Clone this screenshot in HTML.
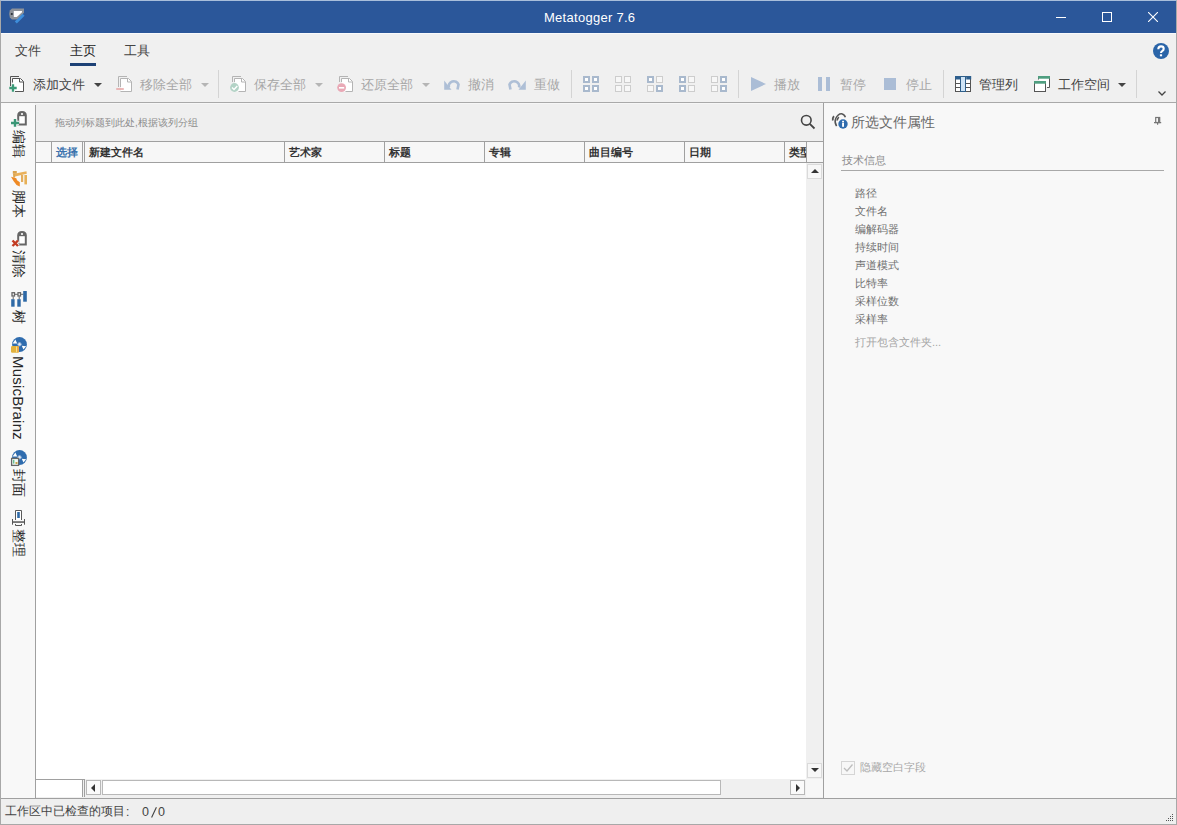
<!DOCTYPE html>
<html><head><meta charset="utf-8">
<style>
*{box-sizing:border-box;margin:0;padding:0}
html,body{width:1177px;height:825px;overflow:hidden;background:#f0f0f0}
body{position:relative;font-family:"Liberation Sans",sans-serif;color:#444}
.a{position:absolute}
.t{position:absolute;white-space:nowrap;line-height:1}
#win{position:absolute;left:0;top:0;width:1177px;height:825px;border:1px solid #a8a8a8;border-top-color:#a8bedb;border-right-color:#a8a8a8}
#title{left:1px;top:1px;width:1175px;height:32px;background:#2b579a}
.rb{color:#444;font-size:13px}
.dis{color:#a6a6a6}
.sep{position:absolute;width:1px;background:#d4d4d4;top:70px;height:28px}
.arr{position:absolute;width:0;height:0;border-left:4px solid transparent;border-right:4px solid transparent;border-top:4px solid #444}
.arr.d{border-top-color:#b5b5b5}
.hl{position:absolute;background:#a0a0a0}
</style></head><body>
<div id="win"></div>
<div class="a" id="title"></div>
<div class="a" style="left:1px;top:33px;width:1175px;height:1px;background:#f9fafb"></div>
<!-- app icon -->
<svg class="a" style="left:0;top:0" width="30" height="30" viewBox="0 0 30 30">
 <path d="M9.8 10.5 Q8.6 14 9.8 17.2 L11.8 19.5 H17.2 L24 12.8 V8.4 H12 Z" fill="#8d9299"/>
 <path d="M13.8 10.9 H22 V12.3 L16.8 17 H13.8 Z" fill="#fff"/>
 <circle cx="11.8" cy="14" r="1.1" fill="#2a2f36"/>
 <path d="M15.8 22.6 L23.6 14.8" stroke="#3e8edb" stroke-width="2.8"/>
</svg>
<div class="t" style="left:544px;top:11px;font-size:13px;letter-spacing:0.28px;color:#fff">Metatogger 7.6</div>
<!-- window controls -->
<div class="a" style="left:1056px;top:17px;width:10px;height:1px;background:#fff"></div>
<div class="a" style="left:1102px;top:12px;width:10px;height:10px;border:1px solid #fff"></div>
<svg class="a" style="left:1148px;top:12px" width="10" height="10" viewBox="0 0 10 10"><path d="M0 0 L10 10 M10 0 L0 10" stroke="#fff" stroke-width="1.1"/></svg>

<!-- tabs -->
<div class="t rb" style="left:15px;top:44px;font-size:13px">文件</div>
<div class="t rb" style="left:70px;top:44px;font-size:13px;color:#222">主页</div>
<div class="a" style="left:70px;top:63px;width:26px;height:3px;background:#1d4176"></div>
<div class="t rb" style="left:124px;top:44px;font-size:13px">工具</div>
<svg class="a" style="left:1153px;top:43px" width="16" height="16" viewBox="0 0 16 16"><circle cx="8" cy="8" r="8" fill="#2a64a8"/><path d="M5.3 6.2 Q5.3 3.4 8 3.4 Q10.7 3.4 10.7 5.8 Q10.7 7.3 9.1 8.1 Q8 8.7 8 10" fill="none" stroke="#fff" stroke-width="2.1"/><rect x="6.9" y="11.3" width="2.2" height="2" fill="#fff"/></svg>

<!-- toolbar -->
<div id="tb">
<svg class="a" style="left:7px;top:74px" width="20" height="20" viewBox="0 0 20 20">
<path d="M6.0 4.5 H14.0 L17.0 7.5 V17.5 H6.0 Z" fill="#fff"/>
<path d="M3.5 12 V2.5 H12.0" fill="none" stroke="#555" stroke-width="1"/>
<path d="M5.5 8.5 V4.5 H13.5 L16.5 7.5 V17.5 H8" fill="none" stroke="#555" stroke-width="1"/>
<path d="M12.5 4.5 V8 H16.5" fill="none" stroke="#555" stroke-width="1"/>
<path d="M2.3 14 H9.7 M6 10.3 V17.8" stroke="#3d9a78" stroke-width="2.3"/></svg>
<div class="t" style="left:33px;top:78px;font-size:13px;color:#444;">添加文件</div>
<div class="arr" style="left:94px;top:83px"></div>
<svg class="a" style="left:114px;top:74px" width="20" height="20" viewBox="0 0 20 20">
<path d="M7.0 4.5 H15.0 L18.0 7.5 V17.5 H7.0 Z" fill="#fff"/>
<path d="M4.5 13 V2.5 H13.0" fill="none" stroke="#b4b4b4" stroke-width="1"/>
<path d="M6.5 13 V4.5 H14.5 L17.5 7.5 V17.5 H6.5" fill="none" stroke="#b4b4b4" stroke-width="1"/>
<path d="M13.5 4.5 V8 H17.5" fill="none" stroke="#b4b4b4" stroke-width="1"/>
<rect x="2.2" y="14.2" width="7.6" height="1.6" fill="#e8a9a9"/></svg>
<div class="t" style="left:140px;top:78px;font-size:13px;color:#a6a6a6;">移除全部</div>
<div class="arr d" style="left:201px;top:83px"></div>
<div class="sep" style="left:218px"></div>
<svg class="a" style="left:227px;top:74px" width="20" height="20" viewBox="0 0 20 20">
<path d="M8.0 4.5 H16.0 L19.0 7.5 V17.5 H8.0 Z" fill="#fff"/>
<path d="M5.5 8 V2.5 H14.0" fill="none" stroke="#b4b4b4" stroke-width="1"/>
<path d="M7.5 8 V4.5 H15.5 L18.5 7.5 V17.5 H11.5" fill="none" stroke="#b4b4b4" stroke-width="1"/>
<path d="M14.5 4.5 V8 H18.5" fill="none" stroke="#b4b4b4" stroke-width="1"/>
<circle cx="7.5" cy="13.5" r="4.4" fill="#b3d3c6"/><path d="M5 13.5 L7 15.5 L10.3 12" fill="none" stroke="#fff" stroke-width="1.4"/></svg>
<div class="t" style="left:254px;top:78px;font-size:13px;color:#a6a6a6;">保存全部</div>
<div class="arr d" style="left:315px;top:83px"></div>
<svg class="a" style="left:334px;top:74px" width="20" height="20" viewBox="0 0 20 20">
<path d="M8.0 4.5 H16.0 L19.0 7.5 V17.5 H8.0 Z" fill="#fff"/>
<path d="M5.5 8 V2.5 H14.0" fill="none" stroke="#b4b4b4" stroke-width="1"/>
<path d="M7.5 8 V4.5 H15.5 L18.5 7.5 V17.5 H11.5" fill="none" stroke="#b4b4b4" stroke-width="1"/>
<path d="M14.5 4.5 V8 H18.5" fill="none" stroke="#b4b4b4" stroke-width="1"/>
<circle cx="7.6" cy="13.6" r="4.4" fill="#e9a9b6"/><rect x="5" y="13" width="5.2" height="1.6" fill="#fff"/></svg>
<div class="t" style="left:361px;top:78px;font-size:13px;color:#a6a6a6;">还原全部</div>
<div class="arr d" style="left:422px;top:83px"></div>
<svg class="a" style="left:441px;top:74px" width="20" height="20" viewBox="0 0 20 20">
<path d="M8 13.5 A5 4.8 0 0 1 17.5 10.5 L16.5 15.5" fill="none" stroke="#aebfd6" stroke-width="2.6"/>
<path d="M3.2 6.5 V15.8 H10.5 Z" fill="#aebfd6"/></svg>
<div class="t" style="left:468px;top:78px;font-size:13px;color:#a6a6a6;">撤消</div>
<svg class="a" style="left:507px;top:74px" width="20" height="20" viewBox="0 0 20 20">
<path d="M12 13.5 A5 4.8 0 0 0 2.5 10.5 L3.5 15.5" fill="none" stroke="#aebfd6" stroke-width="2.6"/>
<path d="M18.8 6.5 V15.8 H11.5 Z" fill="#aebfd6"/></svg>
<div class="t" style="left:534px;top:78px;font-size:13px;color:#a6a6a6;">重做</div>
<div class="sep" style="left:571px"></div>
<svg class="a" style="left:583px;top:76px" width="16" height="16" viewBox="0 0 16 16"><rect x="1" y="1" width="5" height="5" fill="#fff" stroke="#a9b9cd" stroke-width="2"/><rect x="10" y="1" width="5" height="5" fill="#fff" stroke="#a9b9cd" stroke-width="2"/><rect x="1" y="10" width="5" height="5" fill="#fff" stroke="#a9b9cd" stroke-width="2"/><rect x="10" y="10" width="5" height="5" fill="#fff" stroke="#a9b9cd" stroke-width="2"/></svg>
<svg class="a" style="left:615px;top:76px" width="16" height="16" viewBox="0 0 16 16"><rect x="0.5" y="0.5" width="6" height="6" fill="#f7f7f7" stroke="#cdcdcd" stroke-width="1"/><rect x="9.5" y="0.5" width="6" height="6" fill="#f7f7f7" stroke="#cdcdcd" stroke-width="1"/><rect x="0.5" y="9.5" width="6" height="6" fill="#f7f7f7" stroke="#cdcdcd" stroke-width="1"/><rect x="9.5" y="9.5" width="6" height="6" fill="#f7f7f7" stroke="#cdcdcd" stroke-width="1"/></svg>
<svg class="a" style="left:647px;top:76px" width="16" height="16" viewBox="0 0 16 16"><rect x="1" y="1" width="5" height="5" fill="#fff" stroke="#a9b9cd" stroke-width="2"/><rect x="9.5" y="0.5" width="6" height="6" fill="#f7f7f7" stroke="#cdcdcd" stroke-width="1"/><rect x="0.5" y="9.5" width="6" height="6" fill="#f7f7f7" stroke="#cdcdcd" stroke-width="1"/><rect x="10" y="10" width="5" height="5" fill="#fff" stroke="#a9b9cd" stroke-width="2"/></svg>
<svg class="a" style="left:679px;top:76px" width="16" height="16" viewBox="0 0 16 16"><rect x="1" y="1" width="5" height="5" fill="#fff" stroke="#a9b9cd" stroke-width="2"/><rect x="9.5" y="0.5" width="6" height="6" fill="#f7f7f7" stroke="#cdcdcd" stroke-width="1"/><rect x="1" y="10" width="5" height="5" fill="#fff" stroke="#a9b9cd" stroke-width="2"/><rect x="9.5" y="9.5" width="6" height="6" fill="#f7f7f7" stroke="#cdcdcd" stroke-width="1"/></svg>
<svg class="a" style="left:711px;top:76px" width="16" height="16" viewBox="0 0 16 16"><rect x="0.5" y="0.5" width="6" height="6" fill="#f7f7f7" stroke="#cdcdcd" stroke-width="1"/><rect x="10" y="1" width="5" height="5" fill="#fff" stroke="#a9b9cd" stroke-width="2"/><rect x="0.5" y="9.5" width="6" height="6" fill="#f7f7f7" stroke="#cdcdcd" stroke-width="1"/><rect x="10" y="10" width="5" height="5" fill="#fff" stroke="#a9b9cd" stroke-width="2"/></svg>
<div class="sep" style="left:738px"></div>
<svg class="a" style="left:750px;top:76px" width="17" height="16" viewBox="0 0 17 16"><path d="M1 1 L16 8 L1 15 Z" fill="#abbdd6"/></svg>
<div class="t" style="left:774px;top:78px;font-size:13px;color:#a6a6a6;">播放</div>
<div class="a" style="left:818px;top:77px;width:4px;height:14px;background:#abbdd6"></div><div class="a" style="left:826px;top:77px;width:4px;height:14px;background:#abbdd6"></div>
<div class="t" style="left:840px;top:78px;font-size:13px;color:#a6a6a6;">暂停</div>
<div class="a" style="left:884px;top:78px;width:12px;height:12px;background:#abbdd6"></div>
<div class="t" style="left:906px;top:78px;font-size:13px;color:#a6a6a6;">停止</div>
<div class="sep" style="left:943px"></div>
<svg class="a" style="left:953px;top:74px" width="20" height="20" viewBox="0 0 20 20">
<rect x="2.5" y="2.5" width="15" height="15" fill="#fff" stroke="#555" stroke-width="1"/>
<rect x="2" y="2" width="5" height="3.5" fill="#2d5f8e"/><rect x="13.2" y="2" width="5" height="3.5" fill="#2d5f8e"/>
<path d="M2.5 9.5 H7 M2.5 13.5 H7 M13 9.5 H17.5 M13 13.5 H17.5" stroke="#555" stroke-width="1"/>
<rect x="7.5" y="2.5" width="5" height="15" fill="#cfe4f6" stroke="#2f5f8a" stroke-width="1"/>
</svg>
<div class="t" style="left:979px;top:78px;font-size:13px;color:#444;">管理列</div>
<svg class="a" style="left:1032px;top:74px" width="20" height="20" viewBox="0 0 20 20">
<path d="M6.5 5.5 V2.5 H17.5 V13.5 H15" fill="#fff" stroke="#555" stroke-width="1"/>
<rect x="6" y="2" width="12" height="2.7" fill="#4f9e80"/>
<rect x="2.5" y="7.5" width="11" height="10" fill="#fff" stroke="#555" stroke-width="1"/>
<rect x="2" y="7" width="12" height="2.7" fill="#4f9e80"/>
</svg>
<div class="t" style="left:1058px;top:78px;font-size:13px;color:#444;">工作空间</div>
<div class="arr" style="left:1118px;top:83px"></div>
<div class="sep" style="left:1136px"></div>
<svg class="a" style="left:1157px;top:90px" width="10" height="7" viewBox="0 0 10 7"><path d="M1.5 1.5 L5 5 L8.5 1.5" fill="none" stroke="#444" stroke-width="1.3"/></svg>
</div>

<!-- ribbon bottom border -->
<div class="hl" style="left:1px;top:102px;width:1175px;height:1px;background:#a9a9a9"></div>

<!-- sidebar -->
<div class="a" style="left:1px;top:103px;width:34px;height:695px;background:#f8f8f8"></div>
<div class="a" style="left:35px;top:105px;width:1px;height:693px;background:#a0a0a0"></div>

<div id="sb">
<svg class="a" style="left:8px;top:108px" width="22" height="22" viewBox="0 0 22 22">
<path d="M9.2 17.5 V7.5 Q9.2 3 14 3 Q18.8 3 18.8 7.5 V17.5 Z" fill="#666"/>
<rect x="11.2" y="8.2" width="5.6" height="7.3" fill="#fff"/>
<circle cx="14" cy="6" r="1.1" fill="#fff"/><path d="M3 15 H11 M7 11 V18.8" stroke="#f8f8f8" stroke-width="4.4"/><path d="M3 15 H11 M7 11 V18.8" stroke="#3a9676" stroke-width="2.4"/></svg>
<div class="t" style="left:12px;top:130px;font-size:14px;color:#262626;writing-mode:vertical-rl;text-orientation:sideways">编辑</div>
<svg class="a" style="left:8px;top:166px" width="22" height="22" viewBox="0 0 22 22">
<path d="M4.8 5 H8.8 V7.8 H4.8 Z" fill="#d9a24f"/>
<path d="M5 8 L18.5 5.2 L18.8 7.8 L6 10.8 Z" fill="#e9b05a"/>
<rect x="5.2" y="7.8" width="1.9" height="3.8" fill="#dba653"/>
<rect x="13" y="9" width="2.2" height="7" fill="#e3ad5e"/>
<rect x="16.4" y="9" width="2.6" height="9.4" fill="#e7b056"/>
<path d="M3 10.8 L6.5 11.8 L8.3 12.2 L9 14.3 L11.8 16.2 L11.8 20.5 L8.5 19 L8 18.3 L5.5 15 Z" fill="#ef8a25"/>
</svg>
<div class="t" style="left:12px;top:190px;font-size:14px;color:#262626;writing-mode:vertical-rl;text-orientation:sideways">脚本</div>
<svg class="a" style="left:8px;top:228px" width="22" height="22" viewBox="0 0 22 22">
<path d="M9.2 17.5 V7.5 Q9.2 3 14 3 Q18.8 3 18.8 7.5 V17.5 Z" fill="#666"/>
<rect x="11.2" y="8.2" width="5.6" height="7.3" fill="#fff"/>
<circle cx="14" cy="6" r="1.1" fill="#fff"/><path d="M4.5 12.5 L10 18 M10 12.5 L4.5 18" stroke="#f8f8f8" stroke-width="4.4"/><path d="M4.5 12.5 L10 18 M10 12.5 L4.5 18" stroke="#c23b22" stroke-width="2.4"/></svg>
<div class="t" style="left:12px;top:250px;font-size:14px;color:#262626;writing-mode:vertical-rl;text-orientation:sideways">清除</div>
<svg class="a" style="left:8px;top:287px" width="22" height="22" viewBox="0 0 22 22">
<rect x="4" y="5.7" width="2.5" height="3.3" fill="#fff" stroke="#666" stroke-width="1.3"/>
<rect x="10" y="5.7" width="2.5" height="3.3" fill="#fff" stroke="#666" stroke-width="1.3"/>
<path d="M6.5 7.3 H10 M12.5 7.3 H15.5 M5.2 9.5 V12.3 M11.2 9.5 V12.3" stroke="#666" stroke-width="1"/>
<rect x="3.2" y="12.2" width="3.4" height="7.5" fill="#2e69a6"/>
<rect x="9.3" y="12.2" width="3.4" height="7.5" fill="#2e69a6"/>
<rect x="15.2" y="4" width="3.6" height="10.7" fill="#2e69a6"/>
</svg>
<div class="t" style="left:12px;top:310px;font-size:14px;color:#262626;writing-mode:vertical-rl;text-orientation:sideways">树</div>
<svg class="a" style="left:8px;top:333px" width="22" height="22" viewBox="0 0 22 22">
<circle cx="11.5" cy="11.5" r="7.4" fill="#2f6cae"/>
<path d="M4.6 10.4 L7.4 6.4 L9.2 10.4 Z" fill="#fff"/>
<path d="M13.8 12.8 L18.2 13.2 L15.4 16.6 Z" fill="#fff"/>
<circle cx="11.5" cy="11.3" r="1.7" fill="#e8eef7" stroke="#8fb0d8" stroke-width="0.9"/>
<rect x="3" y="13" width="8" height="6.7" rx="1.2" fill="#e3b23c"/><rect x="8" y="13.5" width="1" height="5.7" fill="#f6e08a"/><rect x="9" y="13.5" width="1.8" height="5.7" fill="#eba64a"/></svg>
<div class="t" style="left:11px;top:356px;font-size:15px;letter-spacing:0.2px;color:#262626;writing-mode:vertical-rl;text-orientation:sideways">MusicBrainz</div>
<svg class="a" style="left:8px;top:446px" width="22" height="22" viewBox="0 0 22 22">
<circle cx="11.5" cy="11.5" r="7.4" fill="#2f6cae"/>
<path d="M4.6 10.4 L7.4 6.4 L9.2 10.4 Z" fill="#fff"/>
<path d="M13.8 12.8 L18.2 13.2 L15.4 16.6 Z" fill="#fff"/>
<circle cx="11.5" cy="11.3" r="1.7" fill="#e8eef7" stroke="#8fb0d8" stroke-width="0.9"/>
<rect x="3.6" y="12.4" width="7" height="7" fill="#f4fbf6" stroke="#666" stroke-width="1.3"/><rect x="5" y="13.8" width="1.4" height="3.8" fill="#6cbf95"/><rect x="7.5" y="16" width="2" height="2" fill="#c9a24a"/></svg>
<div class="t" style="left:12px;top:469px;font-size:14px;color:#262626;writing-mode:vertical-rl;text-orientation:sideways">封面</div>
<svg class="a" style="left:8px;top:506px" width="22" height="22" viewBox="0 0 22 22">
<path d="M7.5 14 V4.5 H13.5 V14" fill="#fff" stroke="#5a5a5a" stroke-width="1"/>
<rect x="9.2" y="6" width="2.6" height="6" fill="#2e6aa8"/>
<rect x="4.3" y="15.3" width="12.3" height="1.5" fill="#555"/>
<path d="M4.5 13 V18.7 M16.5 13 V18.7" stroke="#555" stroke-width="1"/>
<path d="M7.5 18 V19.5 H13.5 V18" fill="none" stroke="#555" stroke-width="1"/>
</svg>
<div class="t" style="left:12px;top:529px;font-size:14px;color:#262626;writing-mode:vertical-rl;text-orientation:sideways">整理</div>
</div>
<!-- grid area -->
<div class="a" style="left:36px;top:103px;width:787px;height:38px;background:#efefef"></div>
<div class="a" style="left:36px;top:103px;width:787px;height:1px;background:#f6f6f6"></div>
<div class="t" style="left:55px;top:118px;font-size:10px;color:#8c8c8c">拖动列标题到此处,根据该列分组</div>
<div class="a" style="left:36px;top:141px;width:787px;height:1px;background:#a0a0a0"></div>
<div class="a" style="left:36px;top:142px;width:787px;height:20px;background:#f7f7f7"></div>
<div class="a" style="left:36px;top:162px;width:787px;height:1px;background:#a0a0a0"></div>
<div id="gh">
<div class="a" style="left:51px;top:142px;width:1px;height:20px;background:#a0a0a0"></div>
<div class="a" style="left:82px;top:142px;width:1px;height:20px;background:#a0a0a0"></div>
<div class="a" style="left:84px;top:142px;width:1px;height:20px;background:#a0a0a0"></div>
<div class="a" style="left:284px;top:142px;width:1px;height:20px;background:#a0a0a0"></div>
<div class="a" style="left:384px;top:142px;width:1px;height:20px;background:#a0a0a0"></div>
<div class="a" style="left:484px;top:142px;width:1px;height:20px;background:#a0a0a0"></div>
<div class="a" style="left:584px;top:142px;width:1px;height:20px;background:#a0a0a0"></div>
<div class="a" style="left:684px;top:142px;width:1px;height:20px;background:#a0a0a0"></div>
<div class="a" style="left:784px;top:142px;width:1px;height:20px;background:#a0a0a0"></div>
<div class="a" style="left:806px;top:142px;width:1px;height:20px;background:#a0a0a0"></div>
<div class="t" style="left:56px;top:147px;font-size:11px;font-weight:bold;color:#3a72ad">选择</div>
<div class="t" style="left:89px;top:147px;font-size:11px;font-weight:bold;color:#333">新建文件名</div>
<div class="t" style="left:289px;top:147px;font-size:11px;font-weight:bold;color:#333">艺术家</div>
<div class="t" style="left:389px;top:147px;font-size:11px;font-weight:bold;color:#333">标题</div>
<div class="t" style="left:489px;top:147px;font-size:11px;font-weight:bold;color:#333">专辑</div>
<div class="t" style="left:589px;top:147px;font-size:11px;font-weight:bold;color:#333">曲目编号</div>
<div class="t" style="left:689px;top:147px;font-size:11px;font-weight:bold;color:#333">日期</div>
<div class="a" style="left:785px;top:142px;width:21px;height:20px;overflow:hidden"><div class="t" style="left:4px;top:5px;font-size:11px;font-weight:bold;color:#333">类型</div></div>
</div>
<div class="a" style="left:36px;top:163px;width:770px;height:616px;background:#fff"></div>
<div class="a" style="left:823px;top:103px;width:1px;height:695px;background:#a0a0a0"></div>

<!-- right panel -->
<div class="a" style="left:824px;top:103px;width:352px;height:695px;background:#f8f8f8"></div>

<!-- status bar -->
<div class="a" style="left:1px;top:798px;width:1175px;height:1px;background:#a0a0a0"></div>
<div class="a" style="left:1px;top:799px;width:1175px;height:25px;background:#efefef"></div>
<div class="t" style="left:5px;top:805px;font-size:12px;color:#444">工作区中已检查的项目</div>
<div class="t" style="left:126px;top:806px;font-size:12px;color:#444">:</div>
<div class="t" style="left:142px;top:806px;font-size:12.5px;color:#444">0</div>
<svg class="a" style="left:148px;top:804px" width="12" height="16" viewBox="0 0 12 16"><path d="M3.6 13.4 L8.4 3.2" stroke="#444" stroke-width="1.1"/></svg>
<div class="t" style="left:158px;top:806px;font-size:12.5px;color:#444">0</div>
<div id="rp">
<svg class="a" style="left:800px;top:114px" width="16" height="16" viewBox="0 0 16 16"><circle cx="6.3" cy="6.3" r="4.8" fill="none" stroke="#444" stroke-width="1.6"/><path d="M9.8 9.8 L14.5 14.5" stroke="#444" stroke-width="1.8"/></svg>
<div class="a" style="left:806px;top:163px;width:17px;height:616px;background:#f0f0f0"></div>
<div class="a" style="left:807px;top:164px;width:15px;height:15px;background:#f7f7f7;border:1px solid #dadada"></div>
<div class="a" style="left:811px;top:169px;width:0;height:0;border-left:4px solid transparent;border-right:4px solid transparent;border-bottom:4px solid #333"></div>
<div class="a" style="left:807px;top:763px;width:15px;height:15px;background:#f7f7f7;border:1px solid #dadada"></div>
<div class="a" style="left:811px;top:768px;width:0;height:0;border-left:4px solid transparent;border-right:4px solid transparent;border-top:4px solid #333"></div>
<div class="a" style="left:36px;top:779px;width:48px;height:1px;background:#a0a0a0"></div>
<div class="a" style="left:36px;top:780px;width:46px;height:17px;background:#fff"></div>
<div class="a" style="left:82px;top:779px;width:1px;height:18px;background:#a0a0a0"></div>
<div class="a" style="left:84px;top:779px;width:1px;height:18px;background:#a0a0a0"></div>
<div class="a" style="left:85px;top:779px;width:721px;height:18px;background:#f0f0f0"></div>
<div class="a" style="left:86px;top:780px;width:15px;height:15px;background:#fafafa;border:1px solid #b8b8b8"></div>
<div class="a" style="left:91px;top:784px;width:0;height:0;border-top:4px solid transparent;border-bottom:4px solid transparent;border-right:4px solid #333"></div>
<div class="a" style="left:102px;top:780px;width:619px;height:15px;background:#fff;border:1px solid #b8b8b8"></div>
<div class="a" style="left:790px;top:780px;width:15px;height:15px;background:#fafafa;border:1px solid #b8b8b8"></div>
<div class="a" style="left:796px;top:784px;width:0;height:0;border-top:4px solid transparent;border-bottom:4px solid transparent;border-left:4px solid #333"></div>
<div class="a" style="left:806px;top:779px;width:17px;height:18px;background:#f7f7f7"></div>
<svg class="a" style="left:828px;top:110px" width="22" height="22" viewBox="0 0 22 22">
<path d="M8.6 16.2 Q6.3 12.5 7.6 8.8 Q9.8 3.6 13.6 3.7 Q16.2 4 17.4 7.2" fill="none" stroke="#555" stroke-width="1.5"/>
<path d="M5.9 6.1 Q4.4 8 4.8 10.5" fill="none" stroke="#555" stroke-width="1.8"/>
<path d="M10.9 7.2 Q9.3 8.4 9.2 10.5" fill="none" stroke="#555" stroke-width="1.6"/>
<circle cx="15" cy="14" r="5.2" fill="#f7f7f7"/>
<circle cx="15" cy="14" r="4.7" fill="#2f6cae"/>
<rect x="14.1" y="12.6" width="1.9" height="4.2" fill="#fff"/><rect x="14.1" y="10.8" width="1.9" height="1.3" fill="#fff"/>
</svg>
<div class="t" style="left:851px;top:115px;font-size:14px;color:#686868">所选文件属性</div>
<svg class="a" style="left:1148px;top:110px" width="22" height="22" viewBox="0 0 22 22"><rect x="7.7" y="7.5" width="4" height="5" fill="none" stroke="#777" stroke-width="1.2"/><rect x="10" y="7.5" width="1.7" height="5" fill="#777"/><path d="M6 12.7 H13.2 M9.6 12.7 V14.8" stroke="#777" stroke-width="1.2"/></svg>
<div class="t" style="left:842px;top:155px;font-size:11px;color:#8c8c8c">技术信息</div>
<div class="a" style="left:841px;top:170px;width:323px;height:1px;background:#a8a8a8"></div>
<div class="t" style="left:855px;top:188px;font-size:11px;color:#707070">路径</div>
<div class="t" style="left:855px;top:206px;font-size:11px;color:#707070">文件名</div>
<div class="t" style="left:855px;top:224px;font-size:11px;color:#707070">编解码器</div>
<div class="t" style="left:855px;top:242px;font-size:11px;color:#707070">持续时间</div>
<div class="t" style="left:855px;top:260px;font-size:11px;color:#707070">声道模式</div>
<div class="t" style="left:855px;top:278px;font-size:11px;color:#707070">比特率</div>
<div class="t" style="left:855px;top:296px;font-size:11px;color:#707070">采样位数</div>
<div class="t" style="left:855px;top:314px;font-size:11px;color:#707070">采样率</div>
<div class="t" style="left:855px;top:337px;font-size:11px;color:#a5a5a5">打开包含文件夹...</div>
<div class="a" style="left:841px;top:761px;width:14px;height:14px;border:1px solid #d5d5d5;background:#f7f7f7"></div>
<svg class="a" style="left:841px;top:761px" width="14" height="14" viewBox="0 0 14 14"><path d="M3 7 L6 10 L11.5 3.5" fill="none" stroke="#bdbdbd" stroke-width="1.3"/></svg>
<div class="t" style="left:860px;top:762px;font-size:11px;color:#a8a8a8">隐藏空白字段</div>
<div class="a" style="left:1172px;top:814px;width:1px;height:1px;background:#555"></div>
<div class="a" style="left:1170px;top:816px;width:1px;height:1px;background:#555"></div>
<div class="a" style="left:1172px;top:816px;width:1px;height:1px;background:#555"></div>
<div class="a" style="left:1168px;top:818px;width:1px;height:1px;background:#555"></div>
<div class="a" style="left:1170px;top:818px;width:1px;height:1px;background:#555"></div>
<div class="a" style="left:1172px;top:818px;width:1px;height:1px;background:#555"></div>
<div class="a" style="left:1166px;top:820px;width:1px;height:1px;background:#555"></div>
<div class="a" style="left:1168px;top:820px;width:1px;height:1px;background:#555"></div>
<div class="a" style="left:1170px;top:820px;width:1px;height:1px;background:#555"></div>
<div class="a" style="left:1172px;top:820px;width:1px;height:1px;background:#555"></div>
</div>
</body></html>
